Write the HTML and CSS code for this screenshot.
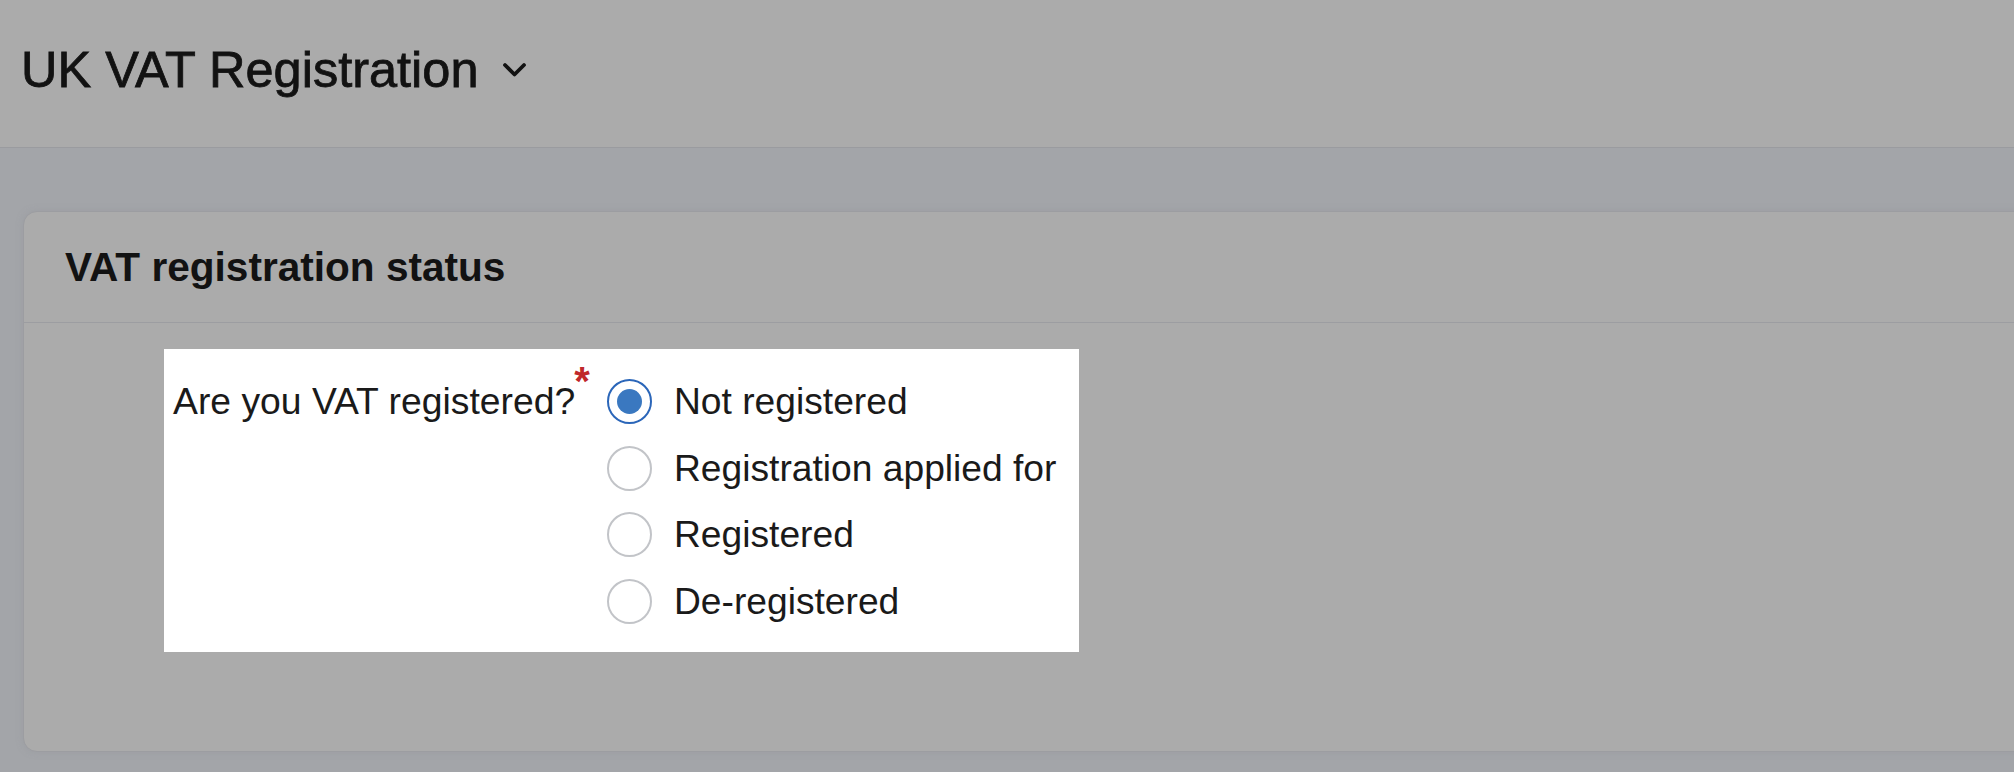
FILE: index.html
```html
<!DOCTYPE html>
<html lang="en">
<head>
<meta charset="utf-8">
<title>UK VAT Registration</title>
<link rel="stylesheet" href="styles.css">
</head>
<body>
  <header class="page-header">
    <h1 class="page-title">UK VAT Registration</h1>
    <svg class="chevron" width="25" height="16" viewBox="0 0 25 16" aria-hidden="true">
      <polyline points="3,3 12.5,12.5 22,3" fill="none" stroke="#121212" stroke-width="3.8" stroke-linecap="round" stroke-linejoin="round"/>
    </svg>
  </header>
  <main class="page-body">
    <section class="card">
      <div class="card-header">
        <h2 class="card-title">VAT registration status</h2>
      </div>
      <div class="card-body">
        <div class="form-box">
          <div class="field-label">Are you VAT registered?<span class="req">*</span></div>
          <div class="options">
            <label class="option"><span class="radio radio-checked"><span class="dot"></span></span><span class="option-text">Not registered</span></label>
            <label class="option"><span class="radio"></span><span class="option-text">Registration applied for</span></label>
            <label class="option"><span class="radio"></span><span class="option-text">Registered</span></label>
            <label class="option"><span class="radio"></span><span class="option-text">De-registered</span></label>
          </div>
        </div>
      </div>
    </section>
  </main>
</body>
</html>
```
FILE: styles.css
```css
* { box-sizing: border-box; }
html, body { margin: 0; padding: 0; }
body {
  background: #a3a5a9;
  font-family: "Liberation Sans", Arial, sans-serif;
  color: #121212;
  overflow: hidden;
  height: 772px;
}
.page-header {
  height: 148px;
  background: #ababab;
  border-bottom: 1px solid #9a9b9f;
  display: flex;
  align-items: center;
  padding-left: 21px;
  padding-bottom: 6px;
}
.page-title {
  margin: 0;
  font-size: 50.5px;
  font-weight: 400;
  -webkit-text-stroke: 0.8px #121212;
  letter-spacing: 0;
  line-height: 1;
}
.chevron {
  margin-left: 24px;
  margin-top: -2px;
  flex: none;
}
.page-body {
  padding: 63px 0 0 23px;
}
.card {
  background: #ababab;
  border: 1px solid #9c9da1;
  border-radius: 14px;
  margin-right: -40px;
  box-shadow: 0 0 6px rgba(150,152,158,0.5);
}
.card-header {
  height: 111px;
  border-bottom: 1px solid #9c9da1;
  display: flex;
  align-items: center;
  padding-left: 41px;
}
.card-title {
  margin: 0;
  font-size: 40.6px;
  font-weight: 700;
  line-height: 1;
}
.card-body {
  padding: 26px 0 99px 140px;
}
.form-box {
  display: inline-grid;
  grid-template-columns: 434px auto;
  background: #ffffff;
  padding: 30px 23px 28px 9px;
  color: #1a1a1a;
}
.field-label {
  font-size: 37.3px;
  line-height: 45px;
  white-space: nowrap;
}
.req {
  color: #c0282b;
  font-size: 40px;
  font-weight: 700;
  line-height: 0;
  vertical-align: 19px;
  margin-left: -1px;
}
.options {
  display: flex;
  flex-direction: column;
  gap: 21.7px;
}
.option {
  display: flex;
  align-items: center;
  gap: 22px;
  height: 45px;
}
.radio {
  width: 45px;
  height: 45px;
  border-radius: 50%;
  border: 2px solid #c2c4c8;
  background: #fff;
  display: flex;
  align-items: center;
  justify-content: center;
  flex: none;
}
.radio-checked {
  border-color: #2b66b9;
}
.dot {
  width: 25px;
  height: 25px;
  border-radius: 50%;
  background: #3a78c0;
}
.option-text {
  font-size: 37.2px;
  line-height: 45px;
  white-space: nowrap;
}
```
